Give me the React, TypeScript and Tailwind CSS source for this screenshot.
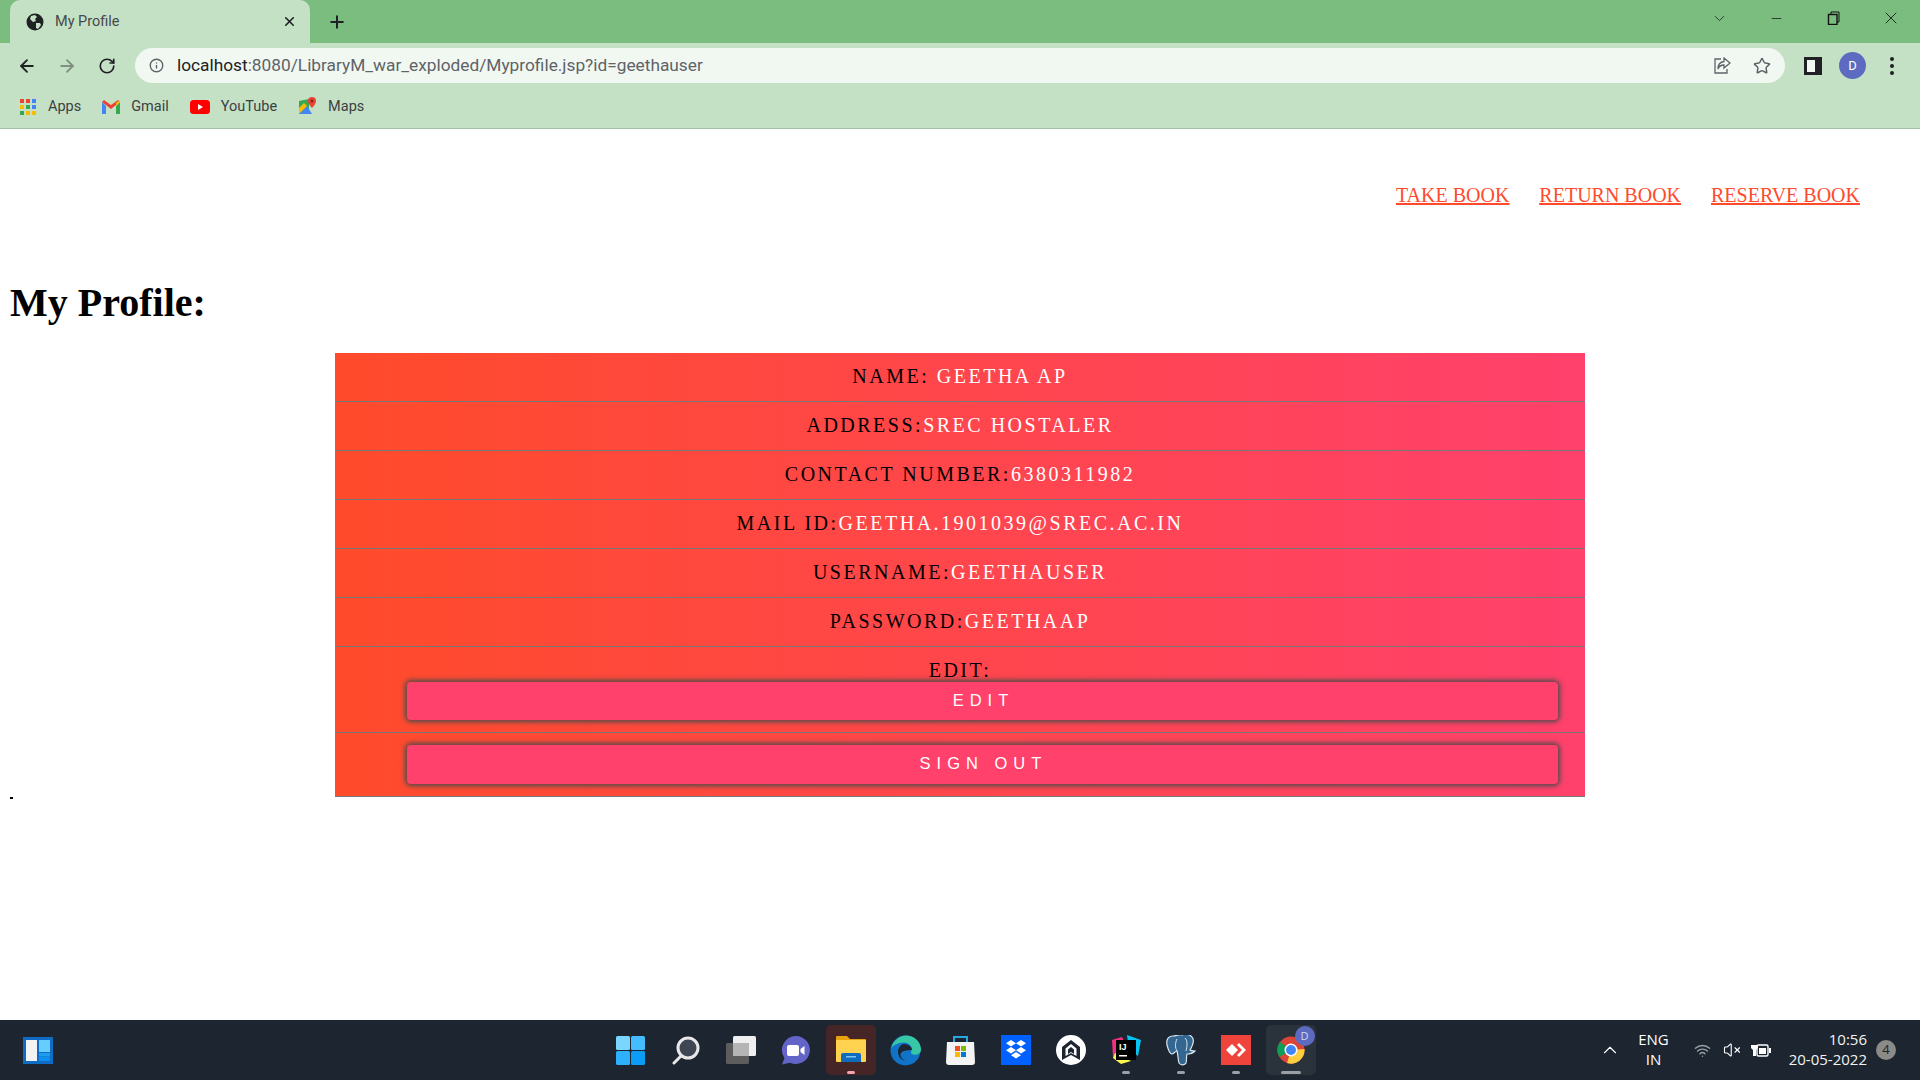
import React from 'react'
import { ArrowLeft, ArrowRight, RotateCw, Info, Star, ChevronDown, ChevronUp, Minus, X, Plus, VolumeX, Wifi } from 'lucide-react'

const rows = [
  { label: 'Name: ', value: 'Geetha AP' },
  { label: 'Address:', value: 'SREC Hostaler' },
  { label: 'Contact Number:', value: '6380311982' },
  { label: 'Mail ID:', value: 'geetha.1901039@srec.ac.in' },
  { label: 'Username:', value: 'geethauser' },
  { label: 'Password:', value: 'geethaap' },
]

function GlobeIcon() {
  return (
    <svg width="18" height="18" viewBox="0 0 18 18">
      <circle cx="9" cy="9" r="8.5" fill="#202124" />
      <path d="M5 3l4-1 2 2-2 2 1 2-3 1-3-3zM10 10l4 0 1 2-3 4-2-1z" fill="#c5e1c5" />
    </svg>
  )
}

function GmailIcon() {
  return (
    <svg width="18" height="14" viewBox="0 0 18 14">
      <path d="M0 2v12h4V6z" fill="#4285f4" />
      <path d="M14 6v8h4V2z" fill="#34a853" />
      <path d="M0 2l9 7 9-7-2-2-7 5-7-5z" fill="#ea4335" />
      <path d="M14 3l4-3v2l-4 4z" fill="#fbbc04" />
    </svg>
  )
}

function YoutubeIcon() {
  return (
    <svg width="20" height="14" viewBox="0 0 20 14">
      <rect width="20" height="14" rx="3.5" fill="#f00" />
      <path d="M8 4l5 3-5 3z" fill="#fff" />
    </svg>
  )
}

function MapsIcon() {
  return (
    <svg width="19" height="19" viewBox="0 0 19 19">
      <path d="M1 4l10-2v15H1z" fill="#34a853" />
      <path d="M1 17l8-8 5 8z" fill="#4285f4" />
      <path d="M1 11l5-5 3 3-8 8z" fill="#fbbc04" />
      <path d="M14 0a4 4 0 0 1 4 4c0 3-4 7-4 7s-4-4-4-7a4 4 0 0 1 4-4z" fill="#ea4335" />
      <circle cx="14" cy="4" r="1.4" fill="#8c2318" />
    </svg>
  )
}

function AppsIcon() {
  const colors = ['#ea4335', '#ea4335', '#4285f4', '#fbbc04', '#34a853', '#4285f4', '#34a853', '#fbbc04', '#fbbc04']
  return (
    <div className="grid grid-cols-3 gap-[2px] mr-[1px]">
      {colors.map((c, i) => (
        <span key={i} className="w-[4px] h-[4px]" style={{ background: c }} />
      ))}
    </div>
  )
}

function Bookmark({ icon, label }: { icon: React.ReactNode; label: string }) {
  return (
    <div className="flex items-center gap-[11px]">
      <div className="flex justify-center">{icon}</div>
      <span className="text-[14.5px] text-[#3c4043]">{label}</span>
    </div>
  )
}

function WindowButton({ children }: { children: React.ReactNode }) {
  return <div className="w-[57px] h-[36px] flex items-center justify-center">{children}</div>
}

function BrowserChrome() {
  return (
    <div className="font-['Roboto',sans-serif] shrink-0">
      {/* タブバー */}
      <div className="h-[43px] bg-[#7abd7e] flex items-end pl-[10px]">
        <div className="w-[300px] h-[43px] bg-[#c5e1c5] rounded-t-[10px] flex items-center pl-[16px] pr-[13px]">
          <GlobeIcon />
          <span className="ml-[11px] text-[14.5px] text-[#45494c] flex-1">My Profile</span>
          <X size={15} strokeWidth={2.6} className="text-[#202124]" />
        </div>
        <div className="h-[43px] flex items-center ml-[17px]">
          <Plus size={20} strokeWidth={2.4} className="text-[#202124]" />
        </div>
        <div className="ml-auto h-[43px] flex items-start text-[#1f2a22] mr-[1px]">
          <WindowButton>
            <ChevronDown size={17} strokeWidth={1.2} />
          </WindowButton>
          <WindowButton>
            <Minus size={15} strokeWidth={1.4} />
          </WindowButton>
          <WindowButton>
            <svg width="14" height="14" viewBox="0 0 14 14" fill="none" stroke="#111">
              <rect x="1.5" y="3.5" width="8.5" height="10" strokeWidth="1.4" />
              <path d="M4 3V1h8v10h-2" strokeWidth="1" />
            </svg>
          </WindowButton>
          <WindowButton>
            <X size={20} strokeWidth={1.2} />
          </WindowButton>
        </div>
      </div>
      {/* ツールバー */}
      <div className="h-[43px] pt-[2px] bg-[#c5e1c5] flex items-center pl-[17px]">
        <ArrowLeft size={20} strokeWidth={2.2} className="text-[#202124]" />
        <ArrowRight size={20} strokeWidth={2.2} className="text-[#7f8f82] ml-[20px]" />
        <RotateCw size={18} strokeWidth={2.2} className="text-[#202124] ml-[21px]" />
        <div className="ml-[19px] w-[1650px] h-[35px] bg-[#f1f8f2] rounded-full flex items-center pl-[14px] pr-[14px]">
          <Info size={15} strokeWidth={2.2} className="text-[#5f6368]" />
          <span className="ml-[13px] text-[17.3px] text-[#5f6368] flex-1">
            <span className="text-[#202124]">localhost</span>:8080/LibraryM_war_exploded/Myprofile.jsp?id=geethauser
          </span>
          <svg width="18" height="18" viewBox="0 0 18 18" fill="none" stroke="#5f6368" strokeWidth="1.3" className="mr-[22px]">
            <path d="M8 2H2v14h12v-4" />
            <path d="M11 1l6 5-6 5V8C8 8 6 9 5 12c0-4 2-7 6-7.500z" />
          </svg>
          <Star size={18} strokeWidth={2} className="text-[#5f6368]" />
        </div>
        <div className="ml-[19px] w-[18px] h-[18px] border-[3px] border-r-[7px] border-[#202124] bg-[#f1f8f2]" />
        <div className="ml-[17px] w-[27px] h-[27px] rounded-full bg-[#5c6bc0] text-white text-[13px] flex items-center justify-center">D</div>
        <div className="ml-[24px] flex flex-col gap-[3px]">
          <span className="w-[4px] h-[4px] rounded-full bg-[#202124]" />
          <span className="w-[4px] h-[4px] rounded-full bg-[#202124]" />
          <span className="w-[4px] h-[4px] rounded-full bg-[#202124]" />
        </div>
      </div>
      {/* ブックマークバー */}
      <div className="h-[43px] pb-[1px] bg-[#c5e1c5] border-b border-[#a3bfa5] flex items-center pl-[20px] gap-[21px]">
        <Bookmark icon={<AppsIcon />} label="Apps" />
        <Bookmark icon={<GmailIcon />} label="Gmail" />
        <Bookmark icon={<YoutubeIcon />} label="YouTube" />
        <Bookmark icon={<MapsIcon />} label="Maps" />
      </div>
    </div>
  )
}

function TaskIcon({ children, active, dot }: { children: React.ReactNode; active?: string; dot?: string }) {
  return (
    <div className="w-[55px] h-[60px] flex items-center justify-center">
      <div className={`relative w-[50px] h-[50px] rounded-[5px] flex items-center justify-center ${active ?? ''}`}>
        {children}
        {dot ? <span className={`absolute bottom-[1px] left-1/2 -translate-x-1/2 h-[3px] rounded-full ${dot}`} /> : null}
      </div>
    </div>
  )
}

function Taskbar() {
  return (
    <div className="h-[60px] shrink-0 bg-[#1c2530] grid grid-cols-[1fr_auto_1fr] items-center font-['Open_Sans',sans-serif] text-white">
      <div className="pl-[23px]">
        <svg width="30" height="27" viewBox="0 0 30 27">
          <rect width="30" height="27" fill="#0f6cc4" />
          <rect x="3" y="3" width="11" height="21" fill="#f3f3f3" />
          <rect x="16" y="3" width="11" height="12" fill="#67cdfc" />
          <rect x="16" y="16" width="11" height="3.500" fill="#1e9cf0" />
          <rect x="16" y="20" width="11" height="4" fill="#0d8ff0" />
        </svg>
      </div>
      <div className="flex pl-[1px]">
        <TaskIcon>
          <svg width="29" height="29" viewBox="0 0 29 29">
            <rect width="14" height="14" rx="1.5" fill="#7ad6ff" />
            <rect x="15" width="14" height="14" rx="1.5" fill="#45bcff" />
            <rect y="15" width="14" height="14" rx="1.5" fill="#2fb0fa" />
            <rect x="15" y="15" width="14" height="14" rx="1.5" fill="#0c9cf5" />
          </svg>
        </TaskIcon>
        <TaskIcon>
          <svg width="28" height="29" viewBox="0 0 28 29">
            <circle cx="16" cy="12" r="10" fill="#3f4653" stroke="#e8e8e8" strokeWidth="3" />
            <path d="M9 20l-7 7" stroke="#e8e8e8" strokeWidth="3" strokeLinecap="round" />
          </svg>
        </TaskIcon>
        <TaskIcon>
          <svg width="30" height="28" viewBox="0 0 30 28">
            <rect x="7" width="23" height="20" rx="1.5" fill="#efefef" />
            <rect y="7" width="23" height="21" rx="1.5" fill="#5d5d5d" />
            <rect x="7" y="7" width="16" height="13" fill="#b5b5b5" />
          </svg>
        </TaskIcon>
        <TaskIcon>
          <svg width="29" height="29" viewBox="0 0 29 29">
            <path d="M15 0a14 14 0 1 1-6 26.700L1 28.500l2.500-6.500A14 14 0 0 1 15 0z" fill="#6264c8" />
            <rect x="6" y="9" width="12" height="11" rx="2" fill="#fff" />
            <path d="M19.500 13l4-3v9l-4-3z" fill="#fff" />
          </svg>
        </TaskIcon>
        <TaskIcon active="bg-[#452526]" dot="w-[8px] bg-[#f4a4ae]">
          <svg width="30" height="27" viewBox="0 0 30 27" className="-mt-[4px]">
            <path d="M0 2a1 1 0 0 1 1-1h10l3 3h15a1 1 0 0 1 1 1v3H0z" fill="#e8a30c" />
            <rect y="5" width="30" height="22" rx="1" fill="#ffd34f" />
            <path d="M5 20a2 2 0 0 1 2-2h16a2 2 0 0 1 2 2v7H5z" fill="#0f6cbd" />
            <rect x="10" y="21" width="10" height="1.500" fill="#7fc4f5" />
          </svg>
        </TaskIcon>
        <TaskIcon>
          <svg width="31" height="31" viewBox="0 0 31 31">
            <circle cx="15.500" cy="15.500" r="15" fill="#1173c8" />
            <path d="M1 14C3 5 10 .5 16 .5c8 0 15 6 15 14 0 4-4 6-8 5-3-1-2-3-1-5 0-4-4-7-8-7-6 0-12 3-13 6.500z" fill="#37c6a6" />
            <path d="M14 9c4 0 8 3 8 6-2 0-9 0-11 3s2 8 6 8c-6 0-9-5-9-9s3-8 6-8z" fill="#1c2530" />
          </svg>
        </TaskIcon>
        <TaskIcon>
          <svg width="29" height="30" viewBox="0 0 29 30">
            <path d="M8 7V2h13v5" fill="none" stroke="#29a8e0" strokeWidth="2" />
            <path d="M1 7h27l1 20a3 3 0 0 1-3 3H3a3 3 0 0 1-3-3z" fill="#f4f4f4" />
            <rect x="9" y="11" width="5" height="5" fill="#f25022" />
            <rect x="15" y="11" width="5" height="5" fill="#7fba00" />
            <rect x="9" y="17" width="5" height="5" fill="#ffb900" />
            <rect x="15" y="17" width="5" height="5" fill="#0078d4" />
          </svg>
        </TaskIcon>
        <TaskIcon>
          <svg width="30" height="30" viewBox="0 0 30 30">
            <rect width="30" height="30" fill="#0061fe" />
            <path d="M10 5l5 3.200-5 3.200-5-3.200zM20 5l5 3.200-5 3.200-5-3.200zM10 12l5 3.200-5 3.200-5-3.200zM20 12l5 3.200-5 3.200-5-3.200zM15 17l5 3.200-5 3.200-5-3.200z" fill="#fff" />
          </svg>
        </TaskIcon>
        <TaskIcon>
          <svg width="30" height="30" viewBox="0 0 30 30">
            <circle cx="15" cy="15" r="15" fill="#fff" />
            <path d="M15 5l9 7v13l-9-5-9 5V12z" fill="#1c2530" />
            <path d="M15 9l5.500 4.500v7.500L15 18l-5.500 3v-7.500z" fill="#fff" />
            <path d="M15 12l3 2.500V19l-3-2-3 2v-4.500z" fill="#1c2530" />
          </svg>
        </TaskIcon>
        <TaskIcon dot="w-[8px] bg-[#9aa0a6]">
          <svg width="30" height="30" viewBox="0 0 30 30">
            <path d="M1 5l10-3 3 6-8 18-4-4z" fill="#f5317f" />
            <path d="M16 0l14 5-3 16-9-6z" fill="#07c3f2" />
            <path d="M4 18l-2 5 8 6 10-3z" fill="#fcf84a" />
            <rect x="5" y="5" width="20" height="20" fill="#000" />
            <text x="8" y="15" fontSize="9" fontWeight="700" fill="#fff" fontFamily="Liberation Sans">IJ</text>
            <rect x="8" y="20" width="8" height="1.500" fill="#fff" />
          </svg>
        </TaskIcon>
        <TaskIcon dot="w-[8px] bg-[#9aa0a6]">
          <svg width="30" height="31" viewBox="0 0 30 31">
            <path d="M7 1c-5 0-7 4-6 9 1 4 3 9 5 9s3-3 5-3c1 3 1 9 2 12 2 3 6 2 7 0 1-3 0-6 1-9 3 0 6-1 8-3-2 0-4 0-5-1 3-5 5-11 1-14-3-2-7-2-9-1-3-1-6 1-9 1z" fill="#336791" stroke="#d8e4ee" strokeWidth="1.200" />
            <path d="M11 4c-2 4-2 9 0 12M19 3c3 3 2 9 1 13" fill="none" stroke="#d8e4ee" strokeWidth="1" />
          </svg>
        </TaskIcon>
        <TaskIcon dot="w-[8px] bg-[#9aa0a6]">
          <svg width="30" height="30" viewBox="0 0 30 30">
            <rect width="30" height="30" fill="#ef443b" />
            <path d="M11 9l6 6-6 6-6-6z" fill="#fff" />
            <path d="M18 8l7 7-7 7-2-2 5-5-5-5z" fill="#fff" />
          </svg>
        </TaskIcon>
        <TaskIcon active="bg-[#2a323c]" dot="w-[20px] bg-[#9aa0a6]">
          <svg width="28" height="28" viewBox="0 0 28 28">
            <circle cx="14" cy="14" r="13.500" fill="#db4437" />
            <path d="M14 14L2.500 21A13.500 13.500 0 0 1 3 6z" fill="#0f9d58" />
            <path d="M14 14l13.500-1A13.500 13.500 0 0 1 10 27z" fill="#ffcd40" />
            <circle cx="14" cy="14" r="6.500" fill="#fff" />
            <circle cx="14" cy="14" r="5" fill="#4285f4" />
          </svg>
          <span className="absolute top-[1px] right-[1px] w-[20px] h-[20px] rounded-full bg-[#5c6bc0] text-[11px] text-[#d5d9f2] flex items-center justify-center">D</span>
        </TaskIcon>
      </div>
      <div className="flex items-center justify-end pr-[24px] h-full">
        <ChevronUp size={22} strokeWidth={1.2} className="mr-[17px]" />
        <div className="text-[15px] leading-[20px] text-center mr-[25px] pb-[2px]">
          <div>ENG</div>
          <div>IN</div>
        </div>
        <Wifi size={17} strokeWidth={2} className="mr-[12px] text-[#9a9fa5]" />
        <VolumeX size={18} strokeWidth={1.5} className="mr-[10px]" />
        <svg width="20" height="16" viewBox="0 0 20 16" className="mr-[18px]">
          <path d="M2 0v3M5 0v3M0 3h7v3L5 8v6H2V8L0 6z" fill="#fff" />
          <rect x="6" y="3" width="11" height="11" rx="1.500" fill="none" stroke="#fff" strokeWidth="1.400" />
          <rect x="8" y="6" width="7" height="6" fill="#fff" />
          <rect x="18" y="6" width="2" height="5" fill="#fff" />
        </svg>
        <div className="text-[15px] leading-[20px] text-right mr-[9px] text-[#f3f3f3] pb-[2px]">
          <div>10:56</div>
          <div>20-05-2022</div>
        </div>
        <div className="w-[20px] h-[20px] rounded-full bg-[#8a8a86] text-[#1c2530] text-[13px] flex items-center justify-center">4</div>
      </div>
    </div>
  )
}

function ProfileRow({ label, value }: { label: string; value: string }) {
  return (
    <div className="h-[49px] pb-[2px] border-b border-[#777777] flex items-center justify-center text-black whitespace-pre">
      <span>{label}</span>
      <span className="text-white">{value}</span>
    </div>
  )
}

function ActionButton({ children, height }: { children: React.ReactNode; height: string }) {
  return (
    <button className={`block ml-[72px] w-[1151px] ${height} rounded-[4px] bg-[#ff416c] shadow-[0_0_5px_2px_#4b4b4b] font-['Liberation_Sans',sans-serif] text-[16.5px] tracking-[6px] text-white uppercase pl-[2px] pb-[2px]`}>
      {children}
    </button>
  )
}

export default function App() {
  return (
    <div className="w-[1920px] h-[1080px] flex flex-col overflow-hidden bg-white">
      <BrowserChrome />
      <main className="flex-1 font-['Liberation_Serif',serif]">
        <nav className="flex justify-end gap-[30px] pt-[54px] pr-[60px] text-[20px] leading-[24px] text-[#ff4b2b] underline">
          <a href="#take">TAKE BOOK</a>
          <a href="#return">RETURN BOOK</a>
          <a href="#reserve">RESERVE BOOK</a>
        </nav>
        <h1 className="mt-[73px] ml-[10px] text-[40px] leading-[46px] font-bold text-black">My Profile:</h1>
        <div className="relative mt-[27px] ml-[335px] w-[1250px] bg-[linear-gradient(to_right,#ff4b2b,#ff416c)] text-[20px] tracking-[2.5px] uppercase">
          {rows.map((r) => (
            <ProfileRow key={r.label} label={r.label} value={r.value} />
          ))}
          <div className="h-[86px] border-b border-[#777777]">
            <div className="text-center text-black leading-[24px] pt-[11px] mb-[0px]">Edit:</div>
            <ActionButton height="h-[38px]">Edit</ActionButton>
          </div>
          <div className="h-[64px] pt-[12px] border-b border-[#777777]">
            <ActionButton height="h-[39px]">Sign Out</ActionButton>
          </div>
          <span className="absolute left-[-325px] bottom-[-2px] w-[3px] h-[2px] bg-black" />
        </div>
      </main>
      <Taskbar />
    </div>
  )
}
